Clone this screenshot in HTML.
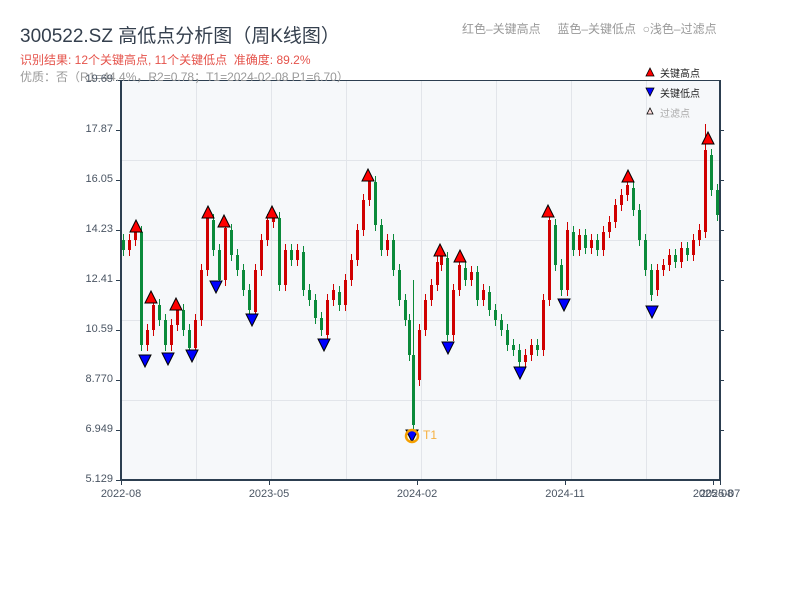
<!DOCTYPE html>
<html><head><meta charset="utf-8"><style>
body{margin:0;width:800px;height:600px;background:#fff;overflow:hidden;font-family:"Liberation Sans","Noto Sans CJK SC",sans-serif;position:relative}
.t{position:absolute;white-space:nowrap}
.r{fill:#d00000}.g{fill:#0a8a3a}
.yl{position:absolute;font-size:11px;color:#4a5563;width:60px;text-align:right;left:53px}
.xl{position:absolute;font-size:11px;color:#4a5563;width:60px;text-align:center;top:488px}
</style></head><body>
<svg width="800" height="600" style="position:absolute;left:0;top:0">
<rect x="121" y="80" width="599" height="400" fill="#f6f8fa"/>
<g fill="#e2e5ea">
<rect x="196" y="80" width="1" height="400"/><rect x="271" y="80" width="1" height="400"/><rect x="346" y="80" width="1" height="400"/><rect x="421" y="80" width="1" height="400"/><rect x="496" y="80" width="1" height="400"/><rect x="571" y="80" width="1" height="400"/><rect x="646" y="80" width="1" height="400"/>
<rect x="121" y="160" width="599" height="1"/><rect x="121" y="240" width="599" height="1"/><rect x="121" y="320" width="599" height="1"/><rect x="121" y="400" width="599" height="1"/>
</g>
<g class="g">
<rect x="123" y="234" width="1" height="22"/><rect x="122" y="240" width="3" height="10"/>
<rect x="141" y="226" width="1" height="125"/><rect x="140" y="232" width="3" height="113"/>
<rect x="159" y="299" width="1" height="27"/><rect x="158" y="305" width="3" height="15"/>
<rect x="165" y="314" width="1" height="37"/><rect x="164" y="320" width="3" height="25"/>
<rect x="183" y="304" width="1" height="32"/><rect x="182" y="310" width="3" height="20"/>
<rect x="189" y="324" width="1" height="30"/><rect x="188" y="330" width="3" height="18"/>
<rect x="213" y="214" width="1" height="42"/><rect x="212" y="220" width="3" height="30"/>
<rect x="219" y="244" width="1" height="42"/><rect x="218" y="250" width="3" height="30"/>
<rect x="231" y="224" width="1" height="37"/><rect x="230" y="230" width="3" height="25"/>
<rect x="237" y="249" width="1" height="27"/><rect x="236" y="255" width="3" height="15"/>
<rect x="243" y="264" width="1" height="32"/><rect x="242" y="270" width="3" height="20"/>
<rect x="249" y="284" width="1" height="32"/><rect x="248" y="290" width="3" height="20"/>
<rect x="279" y="212" width="1" height="79"/><rect x="278" y="218" width="3" height="67"/>
<rect x="291" y="244" width="1" height="22"/><rect x="290" y="250" width="3" height="10"/>
<rect x="303" y="246" width="1" height="50"/><rect x="302" y="252" width="3" height="38"/>
<rect x="309" y="284" width="1" height="22"/><rect x="308" y="290" width="3" height="10"/>
<rect x="315" y="294" width="1" height="30"/><rect x="314" y="300" width="3" height="18"/>
<rect x="321" y="312" width="1" height="24"/><rect x="320" y="318" width="3" height="12"/>
<rect x="339" y="286" width="1" height="25"/><rect x="338" y="292" width="3" height="13"/>
<rect x="375" y="176" width="1" height="55"/><rect x="374" y="182" width="3" height="43"/>
<rect x="381" y="219" width="1" height="37"/><rect x="380" y="225" width="3" height="25"/>
<rect x="393" y="234" width="1" height="42"/><rect x="392" y="240" width="3" height="30"/>
<rect x="399" y="264" width="1" height="42"/><rect x="398" y="270" width="3" height="30"/>
<rect x="405" y="294" width="1" height="32"/><rect x="404" y="300" width="3" height="20"/>
<rect x="409" y="314" width="1" height="47"/><rect x="408" y="320" width="3" height="35"/>
<rect x="413" y="280" width="1" height="152"/><rect x="412" y="355" width="3" height="70"/>
<rect x="447" y="252" width="1" height="89"/><rect x="446" y="258" width="3" height="77"/>
<rect x="465" y="262" width="1" height="24"/><rect x="464" y="268" width="3" height="12"/>
<rect x="477" y="266" width="1" height="40"/><rect x="476" y="272" width="3" height="28"/>
<rect x="489" y="286" width="1" height="30"/><rect x="488" y="292" width="3" height="18"/>
<rect x="495" y="304" width="1" height="22"/><rect x="494" y="310" width="3" height="10"/>
<rect x="501" y="314" width="1" height="22"/><rect x="500" y="320" width="3" height="10"/>
<rect x="507" y="324" width="1" height="27"/><rect x="506" y="330" width="3" height="15"/>
<rect x="513" y="339" width="1" height="17"/><rect x="512" y="345" width="3" height="5"/>
<rect x="519" y="344" width="1" height="24"/><rect x="518" y="350" width="3" height="12"/>
<rect x="537" y="339" width="1" height="17"/><rect x="536" y="345" width="3" height="5"/>
<rect x="555" y="219" width="1" height="52"/><rect x="554" y="225" width="3" height="40"/>
<rect x="561" y="259" width="1" height="37"/><rect x="560" y="265" width="3" height="25"/>
<rect x="573" y="226" width="1" height="30"/><rect x="572" y="232" width="3" height="18"/>
<rect x="585" y="229" width="1" height="25"/><rect x="584" y="235" width="3" height="13"/>
<rect x="597" y="234" width="1" height="22"/><rect x="596" y="240" width="3" height="10"/>
<rect x="633" y="182" width="1" height="34"/><rect x="632" y="188" width="3" height="22"/>
<rect x="639" y="204" width="1" height="42"/><rect x="638" y="210" width="3" height="30"/>
<rect x="645" y="234" width="1" height="42"/><rect x="644" y="240" width="3" height="30"/>
<rect x="651" y="264" width="1" height="37"/><rect x="650" y="270" width="3" height="25"/>
<rect x="675" y="249" width="1" height="19"/><rect x="674" y="255" width="3" height="7"/>
<rect x="687" y="242" width="1" height="19"/><rect x="686" y="248" width="3" height="7"/>
<rect x="711" y="149" width="1" height="47"/><rect x="710" y="155" width="3" height="35"/>
<rect x="717" y="184" width="1" height="37"/><rect x="716" y="190" width="3" height="25"/>
</g>
<g class="r">
<rect x="129" y="234" width="1" height="22"/><rect x="128" y="240" width="3" height="10"/>
<rect x="135" y="222" width="1" height="24"/><rect x="134" y="228" width="3" height="12"/>
<rect x="147" y="324" width="1" height="27"/><rect x="146" y="330" width="3" height="15"/>
<rect x="153" y="299" width="1" height="37"/><rect x="152" y="305" width="3" height="25"/>
<rect x="171" y="319" width="1" height="32"/><rect x="170" y="325" width="3" height="20"/>
<rect x="177" y="302" width="1" height="29"/><rect x="176" y="308" width="3" height="17"/>
<rect x="195" y="314" width="1" height="40"/><rect x="194" y="320" width="3" height="28"/>
<rect x="201" y="264" width="1" height="62"/><rect x="200" y="270" width="3" height="50"/>
<rect x="207" y="212" width="1" height="64"/><rect x="206" y="218" width="3" height="52"/>
<rect x="225" y="222" width="1" height="64"/><rect x="224" y="228" width="3" height="52"/>
<rect x="255" y="264" width="1" height="54"/><rect x="254" y="270" width="3" height="42"/>
<rect x="261" y="234" width="1" height="42"/><rect x="260" y="240" width="3" height="30"/>
<rect x="267" y="214" width="1" height="32"/><rect x="266" y="220" width="3" height="20"/>
<rect x="273" y="209" width="1" height="19"/><rect x="272" y="215" width="3" height="7"/>
<rect x="285" y="244" width="1" height="47"/><rect x="284" y="250" width="3" height="35"/>
<rect x="297" y="244" width="1" height="22"/><rect x="296" y="250" width="3" height="10"/>
<rect x="327" y="294" width="1" height="47"/><rect x="326" y="300" width="3" height="35"/>
<rect x="333" y="284" width="1" height="22"/><rect x="332" y="290" width="3" height="10"/>
<rect x="345" y="274" width="1" height="37"/><rect x="344" y="280" width="3" height="25"/>
<rect x="351" y="254" width="1" height="32"/><rect x="350" y="260" width="3" height="20"/>
<rect x="357" y="224" width="1" height="42"/><rect x="356" y="230" width="3" height="30"/>
<rect x="363" y="194" width="1" height="42"/><rect x="362" y="200" width="3" height="30"/>
<rect x="369" y="174" width="1" height="32"/><rect x="368" y="180" width="3" height="20"/>
<rect x="387" y="234" width="1" height="22"/><rect x="386" y="240" width="3" height="10"/>
<rect x="419" y="324" width="1" height="62"/><rect x="418" y="330" width="3" height="50"/>
<rect x="425" y="294" width="1" height="42"/><rect x="424" y="300" width="3" height="30"/>
<rect x="431" y="279" width="1" height="27"/><rect x="430" y="285" width="3" height="15"/>
<rect x="437" y="256" width="1" height="35"/><rect x="436" y="262" width="3" height="23"/>
<rect x="441" y="249" width="1" height="22"/><rect x="440" y="255" width="3" height="10"/>
<rect x="453" y="284" width="1" height="57"/><rect x="452" y="290" width="3" height="45"/>
<rect x="459" y="259" width="1" height="37"/><rect x="458" y="265" width="3" height="25"/>
<rect x="471" y="266" width="1" height="20"/><rect x="470" y="272" width="3" height="8"/>
<rect x="483" y="284" width="1" height="22"/><rect x="482" y="290" width="3" height="10"/>
<rect x="525" y="349" width="1" height="19"/><rect x="524" y="355" width="3" height="7"/>
<rect x="531" y="339" width="1" height="22"/><rect x="530" y="345" width="3" height="10"/>
<rect x="543" y="294" width="1" height="62"/><rect x="542" y="300" width="3" height="50"/>
<rect x="549" y="214" width="1" height="92"/><rect x="548" y="220" width="3" height="80"/>
<rect x="567" y="222" width="1" height="74"/><rect x="566" y="230" width="3" height="60"/>
<rect x="579" y="229" width="1" height="27"/><rect x="578" y="235" width="3" height="15"/>
<rect x="591" y="234" width="1" height="20"/><rect x="590" y="240" width="3" height="8"/>
<rect x="603" y="226" width="1" height="30"/><rect x="602" y="232" width="3" height="18"/>
<rect x="609" y="216" width="1" height="22"/><rect x="608" y="222" width="3" height="10"/>
<rect x="615" y="199" width="1" height="29"/><rect x="614" y="205" width="3" height="17"/>
<rect x="621" y="189" width="1" height="22"/><rect x="620" y="195" width="3" height="10"/>
<rect x="627" y="179" width="1" height="22"/><rect x="626" y="185" width="3" height="10"/>
<rect x="657" y="264" width="1" height="32"/><rect x="656" y="270" width="3" height="20"/>
<rect x="663" y="259" width="1" height="17"/><rect x="662" y="265" width="3" height="5"/>
<rect x="669" y="249" width="1" height="22"/><rect x="668" y="255" width="3" height="10"/>
<rect x="681" y="242" width="1" height="26"/><rect x="680" y="248" width="3" height="14"/>
<rect x="693" y="234" width="1" height="27"/><rect x="692" y="240" width="3" height="15"/>
<rect x="699" y="224" width="1" height="22"/><rect x="698" y="230" width="3" height="10"/>
<rect x="705" y="124" width="1" height="114"/><rect x="704" y="150" width="3" height="82"/>
</g>
<g fill="#f00" stroke="#000" stroke-width="1">
<polygon points="130,232 142,232 136,220"/><polygon points="145,303 157,303 151,291"/><polygon points="170,310 182,310 176,298"/><polygon points="202,218 214,218 208,206"/><polygon points="218,227 230,227 224,215"/><polygon points="266,218 278,218 272,206"/><polygon points="362,181 374,181 368,169"/><polygon points="434,256 446,256 440,244"/><polygon points="454,262 466,262 460,250"/><polygon points="542,217 554,217 548,205"/><polygon points="622,182 634,182 628,170"/><polygon points="702,144 714,144 708,132"/>
</g>
<g fill="#00f" stroke="#000" stroke-width="1">
<polygon points="139,355 151,355 145,367"/><polygon points="162,353 174,353 168,365"/><polygon points="186,350 198,350 192,362"/><polygon points="210,281 222,281 216,293"/><polygon points="246,314 258,314 252,326"/><polygon points="318,339 330,339 324,351"/><polygon points="406,430 418,430 412,442"/><polygon points="442,342 454,342 448,354"/><polygon points="514,367 526,367 520,379"/><polygon points="558,299 570,299 564,311"/><polygon points="646,306 658,306 652,318"/>
</g>
<circle cx="412" cy="436" r="6" fill="none" stroke="#f5a000" stroke-width="2.5"/>
<g fill="#2c3e50">
<rect x="120" y="80" width="2" height="401"/><rect x="719" y="80" width="2" height="401"/><rect x="120" y="479" width="601" height="2"/><rect x="121" y="80" width="599" height="1"/>
<rect x="116" y="80" width="4" height="1"/><rect x="116" y="130" width="4" height="1"/><rect x="116" y="180" width="4" height="1"/><rect x="116" y="230" width="4" height="1"/><rect x="116" y="280" width="4" height="1"/><rect x="116" y="330" width="4" height="1"/><rect x="116" y="380" width="4" height="1"/><rect x="116" y="430" width="4" height="1"/><rect x="116" y="480" width="4" height="1"/>
<rect x="721" y="130" width="3" height="1"/><rect x="721" y="180" width="3" height="1"/><rect x="721" y="230" width="3" height="1"/><rect x="721" y="280" width="3" height="1"/><rect x="721" y="330" width="3" height="1"/><rect x="721" y="380" width="3" height="1"/><rect x="721" y="430" width="3" height="1"/>
<rect x="121" y="481" width="1" height="4"/><rect x="269" y="481" width="1" height="4"/><rect x="417" y="481" width="1" height="4"/><rect x="565" y="481" width="1" height="4"/><rect x="713" y="481" width="1" height="4"/><rect x="720" y="481" width="1" height="4"/>
</g>
<polygon points="646,76 654,76 650,68" fill="#f00" stroke="#000" stroke-width="0.8"/>
<polygon points="646,88 654,88 650,96" fill="#00f" stroke="#000" stroke-width="0.8"/>
<polygon points="647,114 653,114 650,108" fill="#fdd" stroke="#000" stroke-width="0.8"/>
</svg>
<div class="t" style="left:20px;top:21px;font-size:19px;color:#343f4d">300522.SZ 高低点分析图（周K线图）</div>
<div class="t" style="left:20px;top:51px;font-size:12px;color:#e5534b">识别结果: 12个关键高点, 11个关键低点&nbsp;&nbsp;准确度: 89.2%</div>
<div class="t" style="left:20px;top:68px;font-size:12px;color:#999">优质：否（R1=44.4%，R2=0.78；T1=2024-02-08 P1=6.70）</div>
<div class="t" style="left:462px;top:20px;font-size:12px;color:#999">红色–关键高点&nbsp;&nbsp;&nbsp;&nbsp;&nbsp;蓝色–关键低点&nbsp;&nbsp;○浅色–过滤点</div>
<div class="t" style="left:423px;top:428px;font-size:12px;color:#f5b040">T1</div>
<div class="t" style="left:660px;top:65px;font-size:10px;color:#222">关键高点</div>
<div class="t" style="left:660px;top:85px;font-size:10px;color:#222">关键低点</div>
<div class="t" style="left:660px;top:105px;font-size:10px;color:#aaa">过滤点</div>
<div class="yl" style="top:73px">19.69</div><div class="yl" style="top:123px">17.87</div><div class="yl" style="top:173px">16.05</div><div class="yl" style="top:223px">14.23</div><div class="yl" style="top:273px">12.41</div><div class="yl" style="top:323px">10.59</div><div class="yl" style="top:373px">8.770</div><div class="yl" style="top:423px">6.949</div><div class="yl" style="top:473px">5.129</div>
<div class="xl" style="left:91px">2022-08</div><div class="xl" style="left:239px">2023-05</div><div class="xl" style="left:387px">2024-02</div><div class="xl" style="left:535px">2024-11</div><div class="xl" style="left:683px">2025-08</div><div class="xl" style="left:690px">2025-07</div>
</body></html>
